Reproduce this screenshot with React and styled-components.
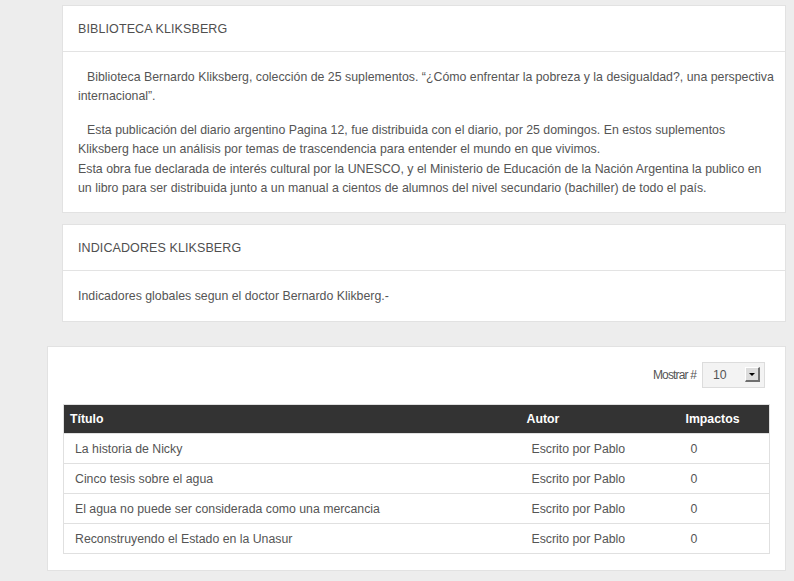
import React from "react"
import styled, { createGlobalStyle } from "styled-components"

const GlobalStyle = createGlobalStyle`
  html, body {
    margin: 0;
    padding: 0;
    background: #ededed;
    font-family: "Liberation Sans", Arial, sans-serif;
    color: #555;
  }
`

const Page = styled.div`
  width: 794px;
  box-sizing: border-box;
  padding: 5px 8px 10px 47px;
`

const Card = styled.section`
  margin: 0 0 11px 15px;
  background: #fff;
  border: 1px solid #e2e2e2;
`

const CardHeader = styled.header`
  height: 45px;
  display: flex;
  align-items: center;
  padding: 0 15px;
  border-bottom: 1px solid #e3e3e3;
`

const CardTitle = styled.h2`
  margin: 0;
  font-size: 12.5px;
  font-weight: normal;
  letter-spacing: 0.1px;
  color: #4f4f4f;
  text-transform: uppercase;
`

const CardBody = styled.div`
  padding: 16px 8px 14px 15px;
  font-size: 12.35px;
  line-height: 19.4px;
  color: #555;
`

const Para = styled.p`
  margin: 0 0 14px;
  text-indent: ${(p) => (p.$indent ? "9px" : "0")};
  &:last-child {
    margin-bottom: 0;
  }
`

const Panel = styled.section`
  margin-top: 24px;
  background: #fff;
  border: 1px solid #e2e2e2;
  padding: 15px 15px 16px;
`

const Toolbar = styled.div`
  display: flex;
  justify-content: flex-end;
  align-items: center;
  gap: 6px;
  padding-right: 5px;
  margin-bottom: 16px;
`

const Label = styled.span`
  font-size: 12px;
  letter-spacing: -0.85px;
  color: #555;
`

const Select = styled.div`
  width: 63px;
  height: 26px;
  box-sizing: border-box;
  display: flex;
  align-items: center;
  justify-content: space-between;
  padding: 0 4px 0 10px;
  background: #f3f3f3;
  border: 1px solid #dcdcdc;
  font-size: 12.3px;
  color: #555;
`

const Arrow = styled.span`
  width: 15px;
  height: 15px;
  box-sizing: border-box;
  display: flex;
  align-items: center;
  justify-content: center;
  background: #dcdcdc;
  border-style: solid;
  border-width: 1px 2px 2px 1px;
  border-color: #fff #6f6f6f #6f6f6f #fff;
  &::after {
    content: "";
    border-left: 3px solid transparent;
    border-right: 3px solid transparent;
    border-top: 3px solid #000;
  }
`

const Table = styled.table`
  width: 100%;
  border-collapse: collapse;
  table-layout: fixed;
  border: 1px solid #e0e0e0;
  font-size: 12.3px;
`

const Th = styled.th`
  box-sizing: border-box;
  width: ${(p) => p.$w || "auto"};
  height: 29px;
  padding: 0 6px;
  background: #333;
  color: #fff;
  font-weight: bold;
  text-align: left;
`

const Td = styled.td`
  height: 28px;
  padding: 1px 11px 0;
  border-top: 1px solid #e0e0e0;
  color: #555;
`

const rows = [
  "La historia de Nicky",
  "Cinco tesis sobre el agua",
  "El agua no puede ser considerada como una mercancia",
  "Reconstruyendo el Estado en la Unasur",
]

const App = () => {
  return (
    <>
      <GlobalStyle />
      <Page>
        <Card>
          <CardHeader>
            <CardTitle>Biblioteca Kliksberg</CardTitle>
          </CardHeader>
          <CardBody>
            <Para $indent>
              Biblioteca Bernardo Kliksberg, colección de 25 suplementos. “¿Cómo enfrentar la pobreza y la
              desigualdad?, una perspectiva internacional”.
            </Para>
            <Para $indent>
              Esta publicación del diario argentino Pagina 12, fue distribuida con el diario, por 25 domingos. En
              estos suplementos Kliksberg hace un análisis por temas de trascendencia para entender el mundo en que
              vivimos.
              <br />
              Esta obra fue declarada de interés cultural por la UNESCO, y el Ministerio de Educación de la Nación
              Argentina la publico en un libro para ser distribuida junto a un manual a cientos de alumnos del nivel
              secundario (bachiller) de todo el país.
            </Para>
          </CardBody>
        </Card>

        <Card>
          <CardHeader>
            <CardTitle>Indicadores Kliksberg</CardTitle>
          </CardHeader>
          <CardBody>
            <Para>Indicadores globales segun el doctor Bernardo Klikberg.-</Para>
          </CardBody>
        </Card>

        <Panel>
          <Toolbar>
            <Label>Mostrar #</Label>
            <Select>
              10
              <Arrow />
            </Select>
          </Toolbar>
          <Table>
            <thead>
              <tr>
                <Th>Título</Th>
                <Th $w="159px">Autor</Th>
                <Th $w="90px">Impactos</Th>
              </tr>
            </thead>
            <tbody>
              {rows.map((title) => (
                <tr key={title}>
                  <Td>{title}</Td>
                  <Td>Escrito por Pablo</Td>
                  <Td>0</Td>
                </tr>
              ))}
            </tbody>
          </Table>
        </Panel>
      </Page>
    </>
  )
}

export default App
